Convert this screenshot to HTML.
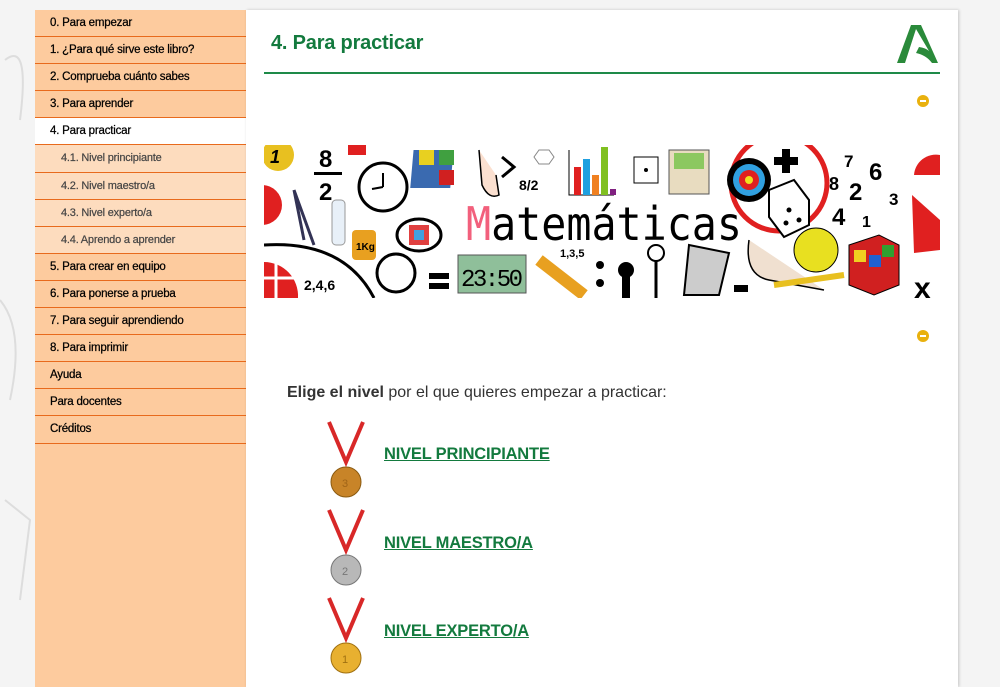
<!DOCTYPE html>
<html><head><meta charset="utf-8"><style>
*{margin:0;padding:0;box-sizing:border-box}
body{width:1000px;height:687px;overflow:hidden;background:#f4f4f4;font-family:"Liberation Sans",sans-serif;position:relative}
#side{position:absolute;left:35px;top:10px;width:211px;height:677px;background:#fdcb9e}
#side div{height:27.1px;border-bottom:1px solid #e86a1c;font-size:11.5px;color:#000;padding-left:15px;line-height:26px;letter-spacing:-0.2px;-webkit-text-stroke:0.25px #000}
#side div.act{background:#fff}
#side div.sub{background:#fddcbe;padding-left:26px;color:#444;font-size:11px;-webkit-text-stroke:0.2px #444}
#main{position:absolute;left:246px;top:10px;width:712px;height:677px;background:#fff;box-shadow:1px 0 3px rgba(0,0,0,.2)}
h1{position:absolute;left:25px;top:22px;font-size:20px;color:#137a3e;font-weight:bold;letter-spacing:-0.2px}
.line{position:absolute;left:18px;top:62px;width:676px;height:2px;background:#1e8a48}
.dot{position:absolute;width:12px;height:12px;border-radius:50%;background:#e9b10e}
.dot:after{content:"";position:absolute;left:3px;top:5px;width:6px;height:2px;background:#fff}
p.t{position:absolute;left:41px;top:374px;font-size:16px;color:#333}
a{position:absolute;left:138px;color:#137a3e;font-weight:bold;font-size:16.5px;text-decoration:underline;letter-spacing:-0.2px}
.med{position:absolute;left:80px}
</style></head><body>
<svg style="position:absolute;left:0;top:0" width="35" height="687"><path d="M5 60 Q30 40 20 120 M0 300 Q25 330 10 400 M5 500 L30 520 L20 600" stroke="#ddd" fill="none" stroke-width="2"/></svg>
<div id="side">
<div>0. Para empezar</div><div>1. ¿Para qué sirve este libro?</div><div>2. Comprueba cuánto sabes</div><div>3. Para aprender</div><div class="act">4. Para practicar</div><div class="sub">4.1. Nivel principiante</div><div class="sub">4.2. Nivel maestro/a</div><div class="sub">4.3. Nivel experto/a</div><div class="sub">4.4. Aprendo a aprender</div><div>5. Para crear en equipo</div><div>6. Para ponerse a prueba</div><div>7. Para seguir aprendiendo</div><div>8. Para imprimir</div><div>Ayuda</div><div>Para docentes</div><div>Créditos</div>
</div>
<div id="main">
<h1>4. Para practicar</h1>
<svg style="position:absolute;left:650px;top:15px" width="46" height="40"><path d="M15 0 L25 0 L42 38 L36 38 Q30 30 20 28 L23 22 Q30 23 33 26 L20 4 L9 38 L1 38 Z" fill="#2a8a3a"/></svg>
<div class="line"></div>
<div class="dot" style="left:671px;top:85px"></div>
<svg style="position:absolute;left:18px;top:135px" width="676" height="153" font-family="Liberation Sans" font-weight="bold">
<circle cx="14" cy="10" r="16" fill="#e8c020"/><text x="6" y="18" font-size="18" font-style="italic">1</text>
<text x="55" y="22" font-size="24">8</text><rect x="50" y="27" width="28" height="3"/><text x="55" y="55" font-size="24">2</text>
<rect x="84" y="0" width="18" height="10" fill="#e02020"/>
<circle cx="119" cy="42" r="24" fill="#fff" stroke="#000" stroke-width="3"/><path d="M119 42 L119 28 M119 42 L108 44" stroke="#000" stroke-width="2"/>
<rect x="150" y="5" width="40" height="38" fill="#3a6ab0" transform="skewX(-5)"/><rect x="155" y="5" width="15" height="15" fill="#e8d020"/><rect x="175" y="25" width="15" height="15" fill="#d02020"/><rect x="175" y="5" width="15" height="15" fill="#40a040"/>
<path d="M215 5 L218 40 Q225 55 235 50 L232 30" stroke="#000" fill="#fbe0d0" stroke-width="1.5"/>
<path d="M238 12 L250 22 L238 32" stroke="#000" fill="none" stroke-width="3"/><text x="255" y="45" font-size="14">8/2</text>
<path d="M275 5 L285 5 L290 12 L285 19 L275 19 L270 12 Z" fill="none" stroke="#888"/>
<path d="M305 5 L305 50 L350 50" stroke="#000" fill="none"/><rect x="310" y="22" width="7" height="28" fill="#e02020"/><rect x="319" y="14" width="7" height="36" fill="#20a0e0"/><rect x="328" y="30" width="7" height="20" fill="#f08020"/><rect x="337" y="2" width="7" height="48" fill="#80c020"/><rect x="346" y="44" width="6" height="6" fill="#802080"/>
<rect x="370" y="12" width="24" height="26" fill="#fff" stroke="#000"/><circle cx="382" cy="25" r="2"/>
<rect x="405" y="5" width="40" height="44" fill="#e8dcc0" stroke="#555"/><rect x="410" y="8" width="30" height="16" fill="#8cc860"/>
<circle cx="515" cy="38" r="48" fill="none" stroke="#e02020" stroke-width="5"/><circle cx="485" cy="35" r="22" fill="#000"/><circle cx="485" cy="35" r="16" fill="#30a0e0"/><circle cx="485" cy="35" r="10" fill="#e02020"/><circle cx="485" cy="35" r="4" fill="#f0e020"/>
<path d="M518 4 h8 v8 h8 v8 h-8 v8 h-8 v-8 h-8 v-8 h8z"/>
<path d="M505 45 L530 35 L545 55 L545 80 L520 92 L505 72 Z" fill="#fff" stroke="#000" stroke-width="2"/><circle cx="525" cy="65" r="2.5"/><circle cx="535" cy="75" r="2.5"/><circle cx="522" cy="78" r="2.5"/>
<text x="580" y="22" font-size="17">7</text><text x="605" y="35" font-size="24">6</text><text x="565" y="45" font-size="18">8</text><text x="585" y="55" font-size="24">2</text><text x="625" y="60" font-size="17">3</text><text x="568" y="80" font-size="24">4</text><text x="598" y="82" font-size="16">1</text>
<path d="M676 10 A22 22 0 0 0 650 30 L676 30 Z" fill="#e02020"/><path d="M648 50 L676 75 L676 105 L650 108 Z" fill="#e02020"/>
<path d="M-2 40 A17 17 0 0 1 -2 80 Z" fill="#e02020"/>
<path d="M0 117 L0 153 L34 153 A34 34 0 0 0 0 117Z" fill="#e02020"/><path d="M12 117 V153 M0 133 H30" stroke="#fff" stroke-width="3"/>
<path d="M0 100 Q80 95 110 153" stroke="#000" fill="none" stroke-width="3"/>
<path d="M30 45 L50 100 M30 45 L40 95" stroke="#335" stroke-width="3"/>
<rect x="68" y="55" width="13" height="45" rx="4" fill="#e8f0f8" stroke="#999"/>
<rect x="88" y="85" width="24" height="30" rx="4" fill="#e8a020"/><text x="92" y="105" font-size="10">1Kg</text>
<ellipse cx="155" cy="90" rx="22" ry="16" fill="#fff" stroke="#000" stroke-width="3"/><rect x="145" y="80" width="20" height="20" fill="#e04040"/><rect x="150" y="85" width="10" height="10" fill="#40a0e0"/>
<circle cx="132" cy="128" r="19" fill="#fff" stroke="#000" stroke-width="3"/><text x="40" y="145" font-size="14">2,4,6</text>
<rect x="165" y="128" width="20" height="6"/><rect x="165" y="138" width="20" height="6"/>
<rect x="194" y="110" width="68" height="38" fill="#8fbf9a" stroke="#555"/><text x="197" y="141" font-size="24" font-weight="normal" font-family="Liberation Mono" textLength="62">23:50</text>
<path d="M275 115 L320 150" stroke="#e8a020" stroke-width="12"/><text x="296" y="112" font-size="11">1,3,5</text>
<circle cx="336" cy="120" r="4"/><circle cx="336" cy="138" r="4"/>
<circle cx="362" cy="125" r="8"/><path d="M362 130 L362 153" stroke="#000" stroke-width="8"/><circle cx="392" cy="108" r="8" fill="#fff" stroke="#000" stroke-width="2"/><path d="M392 116 L392 153" stroke="#000" stroke-width="3"/>
<path d="M425 100 L465 108 L455 150 L420 150Z" fill="#ccc" stroke="#000" stroke-width="2"/>
<rect x="470" y="140" width="14" height="7"/>
<path d="M485 95 Q480 130 505 135 L560 145" stroke="#000" fill="#f0e0d0" stroke-width="1.5"/><path d="M510 140 L580 130" stroke="#e8c020" stroke-width="6"/>
<circle cx="552" cy="105" r="22" fill="#e8e020" stroke="#000"/>
<path d="M585 100 L615 90 L635 100 L635 140 L610 150 L585 140Z" fill="#d02020" stroke="#000"/><rect x="590" y="105" width="12" height="12" fill="#f0d020"/><rect x="605" y="110" width="12" height="12" fill="#2060d0"/><rect x="618" y="100" width="12" height="12" fill="#30a030"/>
<text x="650" y="153" font-size="30">x</text>
<text x="202" y="95" font-size="46" font-weight="normal" font-family="DejaVu Sans Mono" textLength="276" lengthAdjust="spacingAndGlyphs"><tspan fill="#f2607c">M</tspan>atemáticas</text>
</svg>
<div class="dot" style="left:671px;top:320px"></div>
<p class="t"><b>Elige el nivel</b> por el que quieres empezar a practicar:</p>
<svg class="med" style="top:410px" width="40" height="78"><path d="M3 2 L20 42 L37 2" stroke="#d82828" stroke-width="4" fill="none"/><circle cx="20" cy="62" r="15" fill="#c88428" stroke="#8a5a10"/><text x="16" y="67" font-size="11" fill="#a06418">3</text></svg>
<a style="top:435px">NIVEL PRINCIPIANTE</a>
<svg class="med" style="top:498px" width="40" height="78"><path d="M3 2 L20 42 L37 2" stroke="#d82828" stroke-width="4" fill="none"/><circle cx="20" cy="62" r="15" fill="#b8b8b8" stroke="#777"/><text x="16" y="67" font-size="11" fill="#777">2</text></svg>
<a style="top:524px">NIVEL MAESTRO/A</a>
<svg class="med" style="top:586px" width="40" height="78"><path d="M3 2 L20 42 L37 2" stroke="#d82828" stroke-width="4" fill="none"/><circle cx="20" cy="62" r="15" fill="#e8b030" stroke="#a07010"/><text x="16" y="67" font-size="11" fill="#a07010">1</text></svg>
<a style="top:612px">NIVEL EXPERTO/A</a>
</div>
</body></html>
